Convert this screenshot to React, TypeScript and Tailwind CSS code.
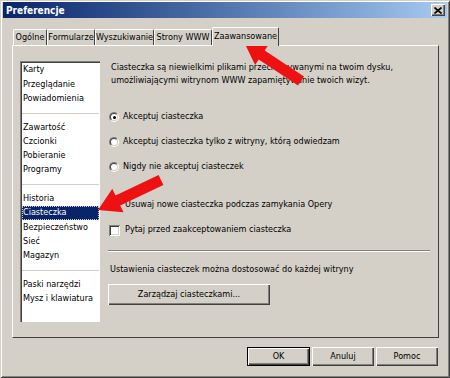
import React from 'react';

const font = { fontFamily: '"DejaVu Sans Condensed", "Liberation Sans", sans-serif' };

const tabs = [
  { label: 'Ogólne', w: 'w-[34px]' },
  { label: 'Formularze', w: 'w-[48px]' },
  { label: 'Wyszukiwanie', w: 'w-[59px]' },
  { label: 'Strony WWW', w: 'w-[58px]' },
];

const listGroups = [
  ['Karty', 'Przeglądanie', 'Powiadomienia'],
  ['Zawartość', 'Czcionki', 'Pobieranie', 'Programy'],
  ['Historia', 'Ciasteczka', 'Bezpieczeństwo', 'Sieć', 'Magazyn'],
  ['Paski narzędzi', 'Mysz i klawiatura'],
];

// polygon for a thick arrow from tail to tip
function arrowPoints(tx: number, ty: number, hx: number, hy: number, shaft: number, headW: number, headL: number) {
  const dx = hx - tx;
  const dy = hy - ty;
  const len = Math.sqrt(dx * dx + dy * dy);
  const ux = dx / len;
  const uy = dy / len;
  const nx = -uy;
  const ny = ux;
  const bx = hx - ux * headL;
  const by = hy - uy * headL;
  const pts = [
    [tx + nx * shaft, ty + ny * shaft],
    [bx + nx * shaft, by + ny * shaft],
    [bx + nx * headW, by + ny * headW],
    [hx, hy],
    [bx - nx * headW, by - ny * headW],
    [bx - nx * shaft, by - ny * shaft],
    [tx - nx * shaft, ty - ny * shaft],
  ];
  return pts.map(p => p.map(v => v.toFixed(1)).join(',')).join(' ');
}

const Radio: React.FC<{ checked?: boolean; label: string }> = ({ checked, label }) => (
  <div className="flex items-center h-[14px]">
    <span className="relative w-[10px] h-[10px] rounded-full border border-t-[#808080] border-l-[#808080] border-r-white border-b-white ml-[1px]">
      <span className="absolute inset-0 rounded-full bg-white border border-t-[#404040] border-l-[#404040] border-r-[#d4d0c8] border-b-[#d4d0c8]" />
      {checked && <span className="absolute left-[2.5px] top-[2.5px] w-[3px] h-[3px] rounded-full bg-black" />}
    </span>
    <span className="ml-[4px]">{label}</span>
  </div>
);

const Check: React.FC<{ label: string }> = ({ label }) => (
  <div className="flex items-center h-[14px]">
    <span className="w-[11px] h-[11px] ml-[1px] bg-white shadow-[inset_1px_1px_0_#808080,inset_-1px_-1px_0_#ffffff,inset_2px_2px_0_#404040,inset_-2px_-2px_0_#d4d0c8]" />
    <span className="ml-[5px]">{label}</span>
  </div>
);

const Btn: React.FC<{ label: string; def?: boolean; cls?: string }> = ({ label, def, cls }) => (
  <div
    className={
      'flex items-center justify-center bg-[#d4d0c8] ' +
      (def
        ? 'border border-black shadow-[inset_1px_1px_0_#ffffff,inset_-1px_-1px_0_#404040,inset_-2px_-2px_0_#808080]'
        : 'shadow-[inset_1px_1px_0_#ffffff,inset_-1px_-1px_0_#404040,inset_-2px_-2px_0_#808080]') +
      ' ' +
      (cls ?? '')
    }
  >
    {label}
  </div>
);

export default function App() {
  return (
    <div
      className="relative w-[450px] h-[378px] bg-[#d4d0c8] text-[9px] text-black overflow-hidden flex flex-col shadow-[inset_1px_1px_0_#d4d0c8,inset_-1px_-1px_0_#404040,inset_2px_2px_0_#ffffff,inset_-2px_-2px_0_#808080]"
      style={font}
    >
      {/* pasek tytułu */}
      <div className="mx-[3px] mt-[2px] h-[16px] flex items-center bg-gradient-to-r from-[#0a246a] to-[#a6caf0] pl-[3px] pr-[2px]">
        <span className="text-white font-bold text-[10px]">Preferencje</span>
        <div className="ml-auto w-[14px] h-[12px] flex items-center justify-center bg-[#d4d0c8] shadow-[inset_1px_1px_0_#ffffff,inset_-1px_-1px_0_#404040,inset_-2px_-2px_0_#808080]">
          <svg width="8" height="7" viewBox="0 0 8 7">
            <path d="M0.5 0.5 L7.5 6.5 M7.5 0.5 L0.5 6.5" stroke="#000" strokeWidth="1.6" />
          </svg>
        </div>
      </div>

      {/* zakładki */}
      <div className="ml-[13px] mt-[9px] h-[18px] flex items-end">
        {tabs.map(t => (
          <div
            key={t.label}
            className={`${t.w} h-[16px] flex items-center justify-center border-t border-l border-white border-r border-r-[#404040] rounded-t-[2px]`}
          >
            {t.label}
          </div>
        ))}
        <div className="w-[67px] h-[19px] -mb-[1px] z-10 bg-[#d4d0c8] flex items-center justify-center border-t border-l border-white border-r border-r-[#404040] rounded-t-[2px]">
          Zaawansowane
        </div>
      </div>

      {/* panel */}
      <div className="ml-[12px] w-[427px] h-[293px] border border-t-white border-l-white border-r-[#404040] border-b-[#404040] flex pl-[7px] pt-[15px]">
        {/* lista */}
        <div className="w-[80px] h-[261px] bg-white shadow-[inset_1px_1px_0_#808080,inset_2px_2px_0_#404040] pt-[2px] pl-[2px] pr-[1px]">
          {listGroups.map((g, gi) => (
            <div key={gi}>
              {gi > 0 && (
                <div className="h-[14.3px] flex items-center">
                  <div className="w-full h-[1px] bg-[#d4d0c8]" />
                </div>
              )}
              {g.map(item => (
                <div
                  key={item}
                  className={
                    'h-[14.3px] flex items-center pl-[1px] ' +
                    (item === 'Ciasteczka' ? 'bg-[#0a246a] text-white outline outline-1 outline-dotted outline-[#d4d0c8] -outline-offset-1' : '')
                  }
                >
                  {item}
                </div>
              ))}
            </div>
          ))}
        </div>

        {/* prawa kolumna */}
        <div className="ml-[8px] w-[322px] flex flex-col">
          <div className="pl-[3px] leading-[13px]">
            Ciasteczka są niewielkimi plikami przechowywanymi na twoim dysku,
            <br />
            umożliwiającymi witrynom WWW zapamiętywanie twoich wizyt.
          </div>
          <div className="mt-[23px]">
            <Radio checked label="Akceptuj ciasteczka" />
          </div>
          <div className="mt-[11px]">
            <Radio label="Akceptuj ciasteczka tylko z witryny, którą odwiedzam" />
          </div>
          <div className="mt-[11px]">
            <Radio label="Nigdy nie akceptuj ciasteczek" />
          </div>
          <div className="mt-[24px]">
            <Check label="Usuwaj nowe ciasteczka podczas zamykania Opery" />
          </div>
          <div className="mt-[11px]">
            <Check label="Pytaj przed zaakceptowaniem ciasteczka" />
          </div>
          <div className="mt-[13px] h-[2px] border-t border-t-[#808080] border-b border-b-white" />
          <div className="mt-[11px] h-[14px] flex items-center pl-[2px]">
            Ustawienia ciasteczek można dostosować do każdej witryny
          </div>
          <Btn label="Zarządzaj ciasteczkami..." cls="mt-[7px] w-[162px] h-[21px]" />
        </div>
      </div>

      {/* przyciski */}
      <div className="mt-[9px] ml-[247px] flex gap-[2px]">
        <Btn label="OK" def cls="w-[63px] h-[19px]" />
        <Btn label="Anuluj" cls="w-[62px] h-[19px]" />
        <Btn label="Pomoc" cls="w-[62px] h-[19px]" />
      </div>

      {/* strzałki */}
      <svg className="absolute inset-0 pointer-events-none" width="450" height="378" viewBox="0 0 450 378">
        <polygon points={arrowPoints(301, 81, 245, 44, 5.5, 12, 20)} fill="#ee1111" />
        <polygon points={arrowPoints(161, 180, 98, 210, 5.5, 13, 22)} fill="#ee1111" />
      </svg>
    </div>
  );
}
